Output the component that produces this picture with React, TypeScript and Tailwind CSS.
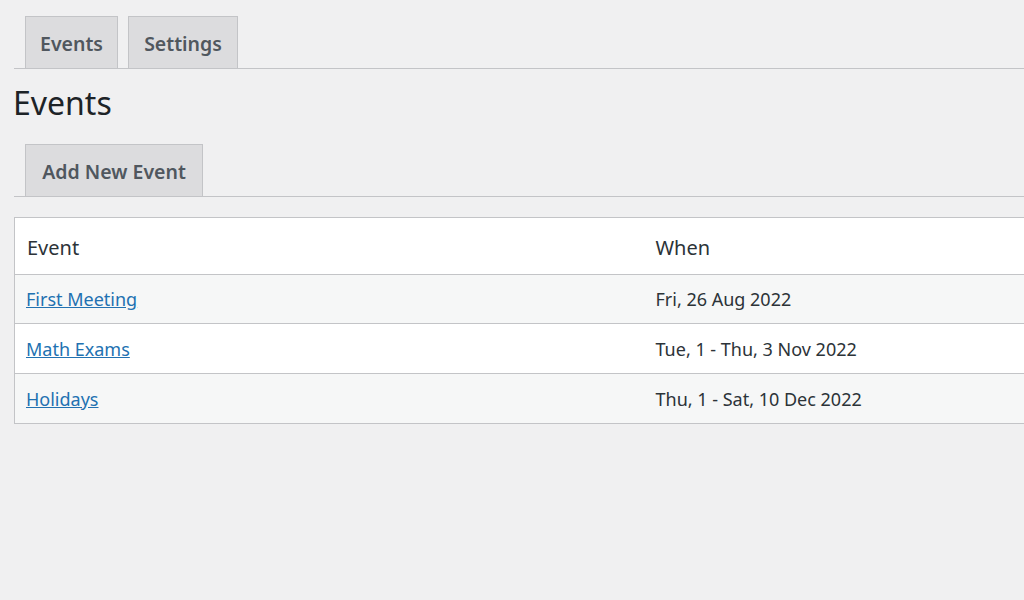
import React from "react";

const rows = [
  { name: "First Meeting", when: "Fri, 26 Aug 2022", h: "h-[49px]" },
  { name: "Math Exams", when: "Tue, 1 - Thu, 3 Nov 2022", h: "h-[50px]" },
  { name: "Holidays", when: "Thu, 1 - Sat, 10 Dec 2022", h: "h-[50px]" },
];

function Tab({ label, w }: { label: string; w: string }) {
  return (
    <div
      className={`${w} h-[53px] -mb-px flex items-center justify-center pt-[2px] bg-[#dcdcde] border border-[#c3c4c7] text-[19.5px] font-semibold text-[#50575e] whitespace-nowrap`}
    >
      {label}
    </div>
  );
}

export default function App() {
  return (
    <div
      className="w-[1024px] h-[600px] overflow-hidden bg-[#f0f0f1] pl-[14px] pt-[16px]"
      style={{ fontFamily: '"Noto Sans", "Open Sans", sans-serif' }}
    >
      <div className="flex gap-[10px] pl-[11px] border-b border-[#c3c4c7]">
        <Tab label="Events" w="w-[93px]" />
        <Tab label="Settings" w="w-[110px]" />
      </div>
      <h1 className="text-[32px] leading-[40px] font-normal text-[#1d2327] mt-[14px] -ml-px">Events</h1>
      <div className="flex pl-[11px] border-b border-[#c3c4c7] mt-[21px]">
        <Tab label="Add New Event" w="w-[178px]" />
      </div>
      <table className="mt-[20px] w-[1300px] border border-[#c3c4c7] border-collapse bg-white text-[#2c3338]">
        <thead>
          <tr className="h-[57px] border-b border-[#c3c4c7]">
            <th className="w-[641px] text-left font-normal text-[20px] pl-[12px] pt-[3px]">Event</th>
            <th className="text-left font-normal text-[20px] pt-[3px]">When</th>
          </tr>
        </thead>
        <tbody>
          {rows.map((r, i) => (
            <tr
              key={r.name}
              className={`${r.h} border-b border-[#c3c4c7] ${i % 2 === 0 ? "bg-[#f6f7f7]" : "bg-white"}`}
            >
              <td className="pl-[11px] text-[18px] pt-[1px]">
                <a href="#" className="text-[#2271b1] underline">
                  {r.name}
                </a>
              </td>
              <td className="text-[18px] text-[#2c3338] pt-[1px]">{r.when}</td>
            </tr>
          ))}
        </tbody>
      </table>
    </div>
  );
}
